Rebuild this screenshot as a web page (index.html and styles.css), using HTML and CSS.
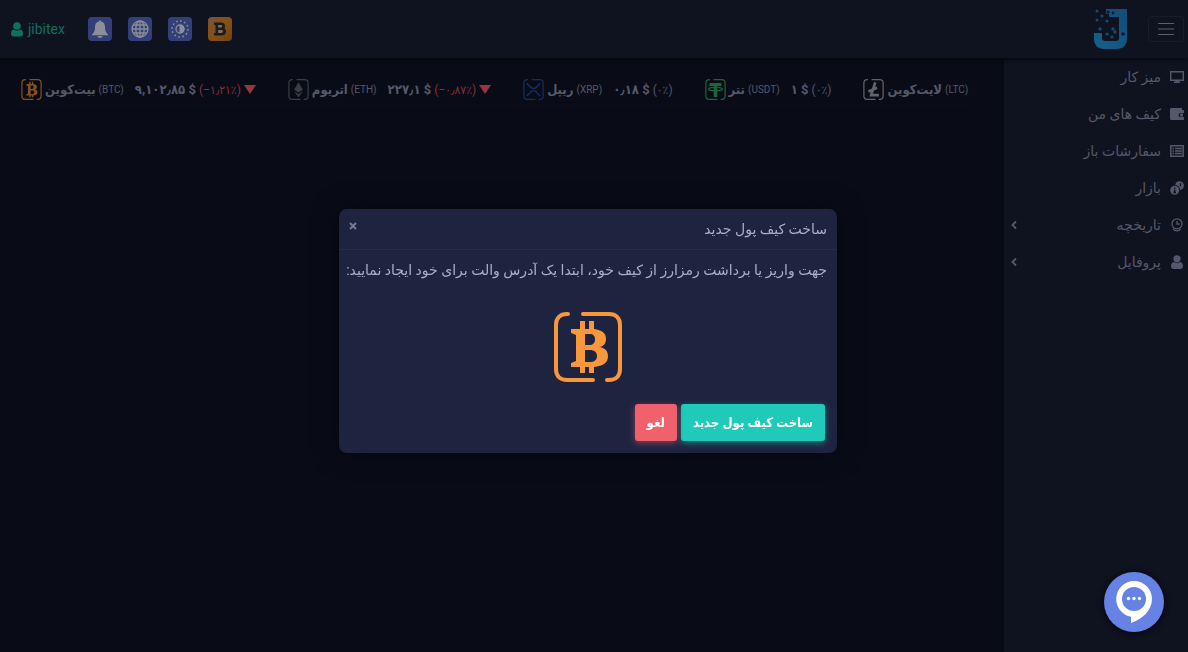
FILE: index.html
```html
<!DOCTYPE html>
<html lang="fa" dir="rtl">
<head>
    <meta charset="UTF-8">
    <meta name="viewport" content="width=device-width, initial-scale=1.0">
    <title>jibitex</title>
    <link rel="stylesheet" href="styles.css">
</head>
<body>
    <header class="navbar">
        <button class="toggler" type="button" aria-label="منو">
            <svg width="16" height="14" viewBox="0 0 16 14"><path d="M0 1.5h16M0 7h16M0 12.5h16" stroke="currentColor" stroke-width="1.2"/></svg>
        </button>
        <a class="logo" href="#" aria-label="jibitex">
            <svg width="34" height="40" viewBox="0 0 34 40">
                <defs>
                    <linearGradient id="logo-fill" x1="0" y1="1" x2="1" y2="0">
                        <stop offset="0" stop-color="#14618b"/>
                        <stop offset="1" stop-color="#154a78"/>
                    </linearGradient>
                </defs>
                <path fill="url(#logo-fill)" d="M12 0h21v30c0 6-4 10-10 10H10C4 40 0 36 0 30v-6h8v5c0 2 1 3 3 3h11c2 0 3-1 3-3V8H15V5h-3z"/>
                <g fill="#124c76">
                    <circle cx="3" cy="2" r="1.5"/><circle cx="3" cy="11" r="1.5"/><circle cx="8" cy="7" r="1.5"/>
                    <circle cx="13" cy="12" r="1.5"/><circle cx="6" cy="20" r="1.7"/><circle cx="13" cy="25" r="1.6"/>
                    <circle cx="19" cy="20" r="1.7"/><circle cx="21" cy="23" r="1.7"/><circle cx="18" cy="28" r="1.6"/>
                </g>
                <g fill="#0e1622">
                    <circle cx="14" cy="3" r="1.5"/><circle cx="19" cy="4" r="1.4"/><circle cx="14" cy="7" r="1.3"/><circle cx="29" cy="25" r="1.8"/>
                </g>
            </svg>
        </a>
        <nav class="tools" dir="ltr">
            <a class="user" href="#">
                <svg width="12" height="15" viewBox="0 0 12 15"><circle cx="6" cy="4" r="3.8" fill="currentColor"/><path fill="currentColor" d="M2.5 7.5C1 8 0 9.300 0 11.500c0 2 1 3 2.500 3h7c1.500 0 2.500-1 2.500-3 0-2.200-1-3.500-2.500-4-2 1.500-5 1.500-7 0z"/></svg>
                jibitex
            </a>
            <button class="tool" type="button" aria-label="اعلان‌ها">
                <svg width="16" height="18" viewBox="0 0 16 18" fill="currentColor"><path d="M8 0l1.200 1.500C12 2 13 4.500 13 7c0 4 1 5.500 3 7.500v.8H0v-.8C2 12.500 3 11 3 7c0-2.500 1-5 3.800-5.500zM5.500 16h5c-.5 2.500-4.500 2.500-5 0z"/></svg>
            </button>
            <button class="tool" type="button" aria-label="زبان">
                <svg width="18" height="18" viewBox="0 0 18 18" fill="none" stroke="currentColor" stroke-width="1.3"><circle cx="9" cy="9" r="8"/><ellipse cx="9" cy="9" rx="4.200" ry="8"/><path d="M9 1v16M1 9h16M2.200 5h13.600M2.200 13h13.600"/></svg>
            </button>
            <button class="tool" type="button" aria-label="حالت روز">
                <svg width="18" height="18" viewBox="0 0 18 18" fill="none" stroke="currentColor"><circle cx="9" cy="9" r="4" stroke-width="1.300"/><path d="M9 5a4 4 0 0 1 0 8z" fill="currentColor"/><path stroke-width="1.500" stroke-dasharray="1.600 2.589" d="M9 1a8 8 0 1 1 0 16a8 8 0 1 1 0-16"/></svg>
            </button>
            <button class="tool tool-coin" type="button" aria-label="Bitcoin">
                <svg width="12" height="14" viewBox="0 0 12 14"><path fill="#77706a" d="M3 2h5v9H3z"/><path fill="none" stroke="currentColor" stroke-width="2.600" d="M0 1.800h7c3.600 0 3.600 4.900 0 4.900H3h4.500c4.200 0 4.200 5.500 0 5.500H0M2.800 1.800v10.400"/></svg>
            </button>
        </nav>
    </header>

    <div class="layout">
        <aside class="sidebar">
            <a class="menu-item" href="#">
                <svg width="14" height="14" viewBox="0 0 14 14"><path d="M.7 1.700h12.600v8.600H.7z" fill="none" stroke="currentColor" stroke-width="1.400"/><path fill="currentColor" d="M5.500 10h3v1.500h1.500V13H4v-1.500h1.500z"/></svg>
                <span>میز کار</span>
            </a>
            <a class="menu-item" href="#">
                <svg width="14" height="14" viewBox="0 0 14 14"><path fill="currentColor" d="M1.500 1h10.500v2H13c.6 0 1 .4 1 1v2h-3.500a1.700 1.700 0 0 0 0 4H14v2c0 .6-.4 1-1 1H1.500C.6 13 0 12.400 0 11.500v-9C0 1.600.6 1 1.500 1z"/><circle cx="11.500" cy="8" r="1.700" fill="currentColor"/></svg>
                <span>کیف های من</span>
            </a>
            <a class="menu-item" href="#">
                <svg width="14" height="14" viewBox="0 0 14 14"><path fill="none" stroke="currentColor" stroke-width="1.500" d="M.8 1.800h12.400v10.400H.8z"/><path stroke="currentColor" stroke-width="1.500" d="M2.500 4.500h1.500M5 4.500h7M2.500 7h1.500M5 7h7M2.500 9.500h1.500M5 9.500h7"/></svg>
                <span>سفارشات باز</span>
            </a>
            <a class="menu-item" href="#">
                <svg width="14" height="14" viewBox="0 0 14 14"><circle cx="9.500" cy="4.600" r="4.400" fill="currentColor"/><circle cx="5" cy="9" r="5" fill="#0f121f"/><circle cx="4.700" cy="9.200" r="4.500" fill="currentColor"/><path stroke="#0f121f" stroke-width="1.400" d="M4.700 6.500v1.300M4.700 8.500v3.200M3.500 11.500h2.500M10.500 2.200v3"/></svg>
                <span>بازار</span>
            </a>
            <a class="menu-item" href="#">
                <svg width="14" height="14" viewBox="0 0 14 14" fill="none" stroke="currentColor" stroke-width="1.300"><circle cx="7" cy="5.800" r="5"/><path d="M7 3v3h2.500M3 10.500c1.500 3 6 3.500 7.500.2"/></svg>
                <span>تاریخچه</span>
                <svg class="chevron" width="6" height="10" viewBox="0 0 6 10"><path d="M5 1.500L1.500 5 5 8.500" fill="none" stroke="currentColor" stroke-width="1.900"/></svg>
            </a>
            <a class="menu-item" href="#">
                <svg width="14" height="14" viewBox="0 0 14 14" fill="currentColor"><circle cx="7" cy="3.800" r="3.600"/><path d="M3.500 7C2 7.500 1 9 1 11c0 2 1 3 2.500 3h7c1.500 0 2.500-1 2.500-3 0-2-1-3.500-2.500-4-2 1.500-5 1.500-7 0z"/></svg>
                <span>پروفایل</span>
                <svg class="chevron" width="6" height="10" viewBox="0 0 6 10"><path d="M5 1.500L1.500 5 5 8.500" fill="none" stroke="currentColor" stroke-width="1.900"/></svg>
            </a>
        </aside>

        <main class="content">
            <div class="ticker" dir="ltr">
                <div class="coin">
                    <svg class="coin-icon btc" viewBox="0 0 68 70"><use href="#btc-mark"/></svg>
                    <b class="coin-name">بیت‌کوین</b>
                    <small class="symbol">(BTC)</small>
                    <span class="price">۹,۱۰۲٫۸۵ $</span>
                    <span class="change down">(−۱٫۲۱٪)</span>
                    <span class="arrow"></span>
                </div>
                <div class="coin">
                    <svg class="coin-icon eth" viewBox="0 0 68 70"><use href="#coin-frame"/><path fill="currentColor" d="M34 11l15 25-15 9-15-9zM19 41l15 9 15-9-15 20z"/></svg>
                    <b class="coin-name">اتریوم</b>
                    <small class="symbol">(ETH)</small>
                    <span class="price">۲۲۷٫۱ $</span>
                    <span class="change down">(−۰٫۸۷٪)</span>
                    <span class="arrow"></span>
                </div>
                <div class="coin">
                    <svg class="coin-icon xrp" viewBox="0 0 68 70"><use href="#coin-frame"/><path fill="none" stroke="currentColor" stroke-width="5" d="M12 14l13 14c5 5 13 5 18 0l13-14M12 57l13-14c5-5 13-5 18 0l13 14"/></svg>
                    <b class="coin-name">ریپل</b>
                    <small class="symbol">(XRP)</small>
                    <span class="price">۰٫۱۸ $</span>
                    <span class="change">(۰٪)</span>
                </div>
                <div class="coin">
                    <svg class="coin-icon usdt" viewBox="0 0 68 70"><use href="#coin-frame"/><path fill="currentColor" d="M14 13h40v10H40v37H28V23H14z"/><path fill="none" stroke="currentColor" stroke-width="4" d="M28 28c-24 2-24 11 6 11s30-9 6-11"/></svg>
                    <b class="coin-name">تتر</b>
                    <small class="symbol">(USDT)</small>
                    <span class="price">۱ $</span>
                    <span class="change">(۰٪)</span>
                </div>
                <div class="coin">
                    <svg class="coin-icon ltc" viewBox="0 0 68 70"><use href="#coin-frame"/><path fill="none" stroke="currentColor" stroke-width="9" d="M40 11L26 54h26M17 42l29-13"/></svg>
                    <b class="coin-name">لایت‌کوین</b>
                    <small class="symbol">(LTC)</small>
                </div>
            </div>
        </main>
    </div>

    <div class="overlay">
        <section class="modal" role="dialog" aria-labelledby="modal-title">
            <div class="modal-header">
                <h5 class="modal-title" id="modal-title">ساخت کیف پول جدید</h5>
                <button class="close" type="button" aria-label="بستن">
                    <svg width="8" height="8" viewBox="0 0 8 8"><path d="M1 1l6 6M7 1L1 7" stroke="currentColor" stroke-width="2"/></svg>
                </button>
            </div>
            <div class="modal-body">
                <p class="modal-text">جهت واریز یا برداشت رمزارز از کیف خود، ابتدا یک آدرس والت برای خود ایجاد نمایید:</p>
                <svg class="wallet-icon" width="68" height="70" viewBox="0 0 68 70">
                    <defs>
                        <path id="coin-frame" fill="none" stroke="currentColor" stroke-width="4" stroke-linecap="round" d="M14 2h-1C6 2 2 6 2 13v44c0 7 4 11 11 11h26M53 68h2c7 0 11-4 11-11V13c0-7-4-11-11-11H29"/>
                        <g id="btc-mark">
                            <use href="#coin-frame"/>
                            <path fill="currentColor" fill-rule="evenodd" d="M17 17h9V9h5v8h4V9h5v8c8 1 12 4 12 10 0 4-2 7-6 8 5 1 8 4 8 9 0 7-5 10-14 11v6h-5v-6h-4v6h-5v-6h-9v-4l5-2V23l-5-2zM31 22v11h4c4 0 6-2 6-6 0-3-2-5-5-5zM31 38v12h5c4 0 7-2 7-6s-3-6-7-6z"/>
                        </g>
                    </defs>
                    <use href="#btc-mark"/>
                </svg>
            </div>
            <div class="modal-footer">
                <button class="btn btn-success" type="button">ساخت کیف پول جدید</button>
                <button class="btn btn-danger" type="button">لغو</button>
            </div>
        </section>
    </div>

    <button class="chat" type="button" aria-label="گفتگو">
        <svg width="36" height="42" viewBox="0 0 36 42">
            <path fill="#fff" d="M18 0a18 18 0 0 1 18 18c0 11-9 20-21 24v-6.300A18 18 0 0 1 18 0z"/>
            <circle cx="18" cy="18" r="12" fill="#6582e4"/>
            <g fill="#fff"><circle cx="12.500" cy="17.500" r="1.700"/><circle cx="18" cy="17.500" r="1.700"/><circle cx="23.500" cy="17.500" r="1.700"/></g>
        </svg>
    </button>
</body>
</html>
```
FILE: styles.css
```css
* {
    box-sizing: border-box;
}
body {
    margin: 0;
    min-height: 100vh;
    display: flex;
    flex-direction: column;
    background-color: #090c17;
    color: #55586a;
    font-family: Roboto, "DejaVu Sans", sans-serif;
    font-size: 14px;
    line-height: 20px;
}
a {
    color: inherit;
    text-decoration: none;
}
button {
    font: inherit;
    border: 0;
    padding: 0;
    cursor: pointer;
}
svg {
    flex: none;
    display: block;
}

/* top bar */
.navbar {
    display: flex;
    align-items: center;
    gap: 20px;
    height: 58px;
    padding: 0 4px 0 11px;
    background-color: #0f121f;
    box-shadow: 0 1px 4px #05070e;
    position: relative;
}
.toggler {
    display: grid;
    place-items: center;
    width: 36px;
    height: 26px;
    background: none;
    border: 1px solid #191c29;
    border-radius: 3px;
    color: #5c5f6c;
}
.tools {
    display: flex;
    align-items: center;
    gap: 16px;
    margin-right: auto;
}
.user {
    display: flex;
    align-items: center;
    gap: 5px;
    margin-right: 7px;
    color: #10705f;
}
.tool {
    display: grid;
    place-items: center;
    width: 24px;
    height: 24px;
    border-radius: 4px;
    background-color: #343f78;
    color: #8c8f99;
}
.tool-coin {
    background: linear-gradient(135deg, #805332, #835012 60%, #6d4310);
    color: #1c1b1d;
}

/* page */
.layout {
    flex: 1;
    display: flex;
}
.sidebar {
    width: 184px;
    background-color: #0f121f;
    box-shadow: 0 0 3px #070911;
}
.menu-item {
    display: flex;
    align-items: center;
    gap: 9px;
    height: 37px;
    padding: 0 4px 0 7px;
}
.menu-item .chevron {
    margin-right: auto;
}
.content {
    flex: 1;
    min-width: 0;
    padding: 10px 31px 0 11px;
}

/* coin prices */
.ticker {
    display: flex;
    gap: 32px;
    height: 44px;
    padding-left: 10px;
    white-space: nowrap;
    border-bottom: 1px solid #080a13;
    font-family: Roboto, "DejaVu Sans Condensed", "DejaVu Sans", sans-serif;
}
.coin {
    display: flex;
    align-items: center;
    gap: 3px;
}
.coin-icon {
    width: 21px;
    height: 21px;
}
.btc { color: #85501f; }
.eth { color: #3b3d43; }
.xrp { color: #142f5c; }
.usdt { color: #1c653a; }
.ltc { color: #63646a; }
.coin-name {
    font-size: 13px;
    font-weight: 700;
}
.symbol {
    font-size: 10px;
}
.price {
    margin-left: 8px;
    font-size: 13px;
    font-weight: 700;
}
.change {
    font-size: 12px;
}
.down {
    color: #8a2f3c;
}
.arrow {
    border: 6px solid transparent;
    border-top: 9px solid #96373f;
    border-bottom: 0;
}

/* modal */
.overlay {
    position: fixed;
    inset: 0;
    display: flex;
    align-items: center;
    justify-content: center;
    padding: 10px 12px 0 0;
}
.modal {
    width: 498px;
    border-radius: 8px;
    background-color: #1e2440;
    color: #a9aec9;
    box-shadow: 0 0 24px #05070f;
}
.modal-header {
    display: flex;
    justify-content: space-between;
    padding: 10px;
    border-bottom: 1px solid #282e48;
}
.modal-title {
    margin: 0;
    font-size: 14px;
    font-weight: 400;
}
.close {
    display: flex;
    align-items: center;
    height: 14px;
    background: none;
    color: #757b93;
}
.modal-body {
    padding: 10px;
}
.modal-text {
    margin: 0;
    white-space: nowrap;
}
.wallet-icon {
    margin: 32px auto 0;
    color: #f7983c;
}
.modal-footer {
    display: flex;
    gap: 4px;
    padding: 12px;
}
.btn {
    height: 37px;
    padding: 0 12px;
    border-radius: 3px;
    color: #fff;
    font-family: Roboto, "DejaVu Sans Condensed", "DejaVu Sans", sans-serif;
    font-size: 13px;
    font-weight: 700;
}
.btn-success {
    background-color: #1fcab8;
    box-shadow: 0 2px 6px #167f7c;
}
.btn-danger {
    background-color: #f0616d;
    box-shadow: 0 2px 6px #884158;
}

.chat {
    position: fixed;
    right: 24px;
    bottom: 20px;
    display: grid;
    place-items: center;
    width: 60px;
    height: 60px;
    border-radius: 50%;
    background-color: #6582e4;
    box-shadow: 0 1px 6px #05070e;
}
```
